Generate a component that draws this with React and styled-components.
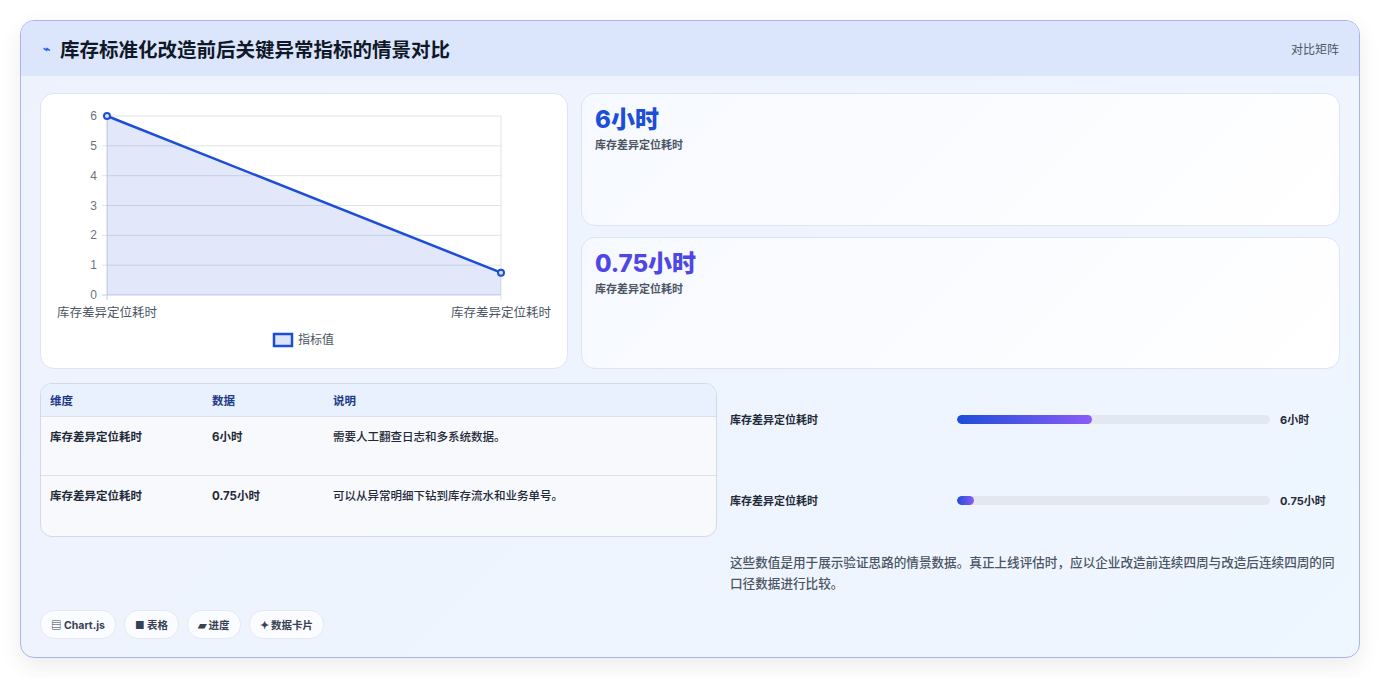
import React from "react";
import styled, { createGlobalStyle } from "styled-components";

const Global = createGlobalStyle`
  body { margin: 0; background: #fff; font-family: Inter, "Noto Sans CJK SC", sans-serif; }
`;

const Page = styled.div`
  padding: 20px 21px 20px 20px;
`;

const Card = styled.div`
  border: 1px solid #a9b4e8;
  border-radius: 14px;
  background: linear-gradient(135deg, #eef2fd, #eef6ff);
  box-shadow: 0 8px 22px rgba(0,0,0,0.08);
  overflow: hidden;
  height: 636px;
  display: flex;
  flex-direction: column;
`;

const Header = styled.div`
  height: 55px;
  background: #dbe6fd;
  display: flex;
  align-items: center;
  justify-content: space-between;
  padding: 0 20px 0 22px;
`;

const Title = styled.h1`
  margin: 0;
  font-size: 19.5px;
  font-weight: 700;
  color: #111827;
  display: flex;
  align-items: center;
  gap: 10px;
`;

const Tag = styled.span`
  font-size: 12px;
  color: #4b5563;
`;

const Body = styled.div`
  padding: 17px 19px 18px 19px;
  display: flex;
  flex-direction: column;
  flex: 1;
`;

const TopRow = styled.div`
  display: grid;
  grid-template-columns: 528px 1fr;
  gap: 13px;
  height: 276px;
`;

const Panel = styled.div`
  background: ${p => p.$grad ? "linear-gradient(135deg,#f6f9ff,#ffffff)" : "#fff"};
  border: 1px solid #dde4f3;
  border-radius: 14px;
`;

const Stack = styled.div`
  display: grid;
  grid-template-rows: 1fr 1fr;
  gap: 11px;
`;

const Stat = styled(Panel)`
  padding: 10px 13px;
`;

const StatValue = styled.div`
  font-size: 24px;
  font-weight: 800;
  color: ${p => p.$c};
  line-height: 32px;
`;

const StatLabel = styled.div`
  font-size: 11px;
  font-weight: 600;
  color: #4b5563;
`;

const BottomRow = styled.div`
  display: grid;
  grid-template-columns: 677px 1fr;
  gap: 13px;
  margin-top: 14px;
`;

const Table = styled.div`
  border: 1px solid #d3d9e6;
  border-radius: 12px;
  overflow: hidden;
  background: #f7f9fd;
  height: 152px;
  align-self: start;
`;

const Row = styled.div`
  display: grid;
  grid-template-columns: 162px 121px 1fr;
  padding: 0 9px;
  height: ${p => p.$h}px;
  align-items: ${p => p.$head ? "center" : "start"};
  padding-top: ${p => p.$head ? 0 : 11}px;
  box-sizing: border-box;
  background: ${p => p.$head ? "#eaf1fe" : "transparent"};
  border-bottom: ${p => p.$last ? "none" : "1px solid #dbe1ec"};
  font-size: 11.5px;
  font-weight: ${p => p.$head ? 700 : 500};
  color: ${p => p.$head ? "#1e3a8a" : "#1f2937"};
`;

const Cell = styled.div`
  font-weight: ${p => p.$b ? 700 : "inherit"};
`;

const Right = styled.div`
  padding-top: 27px;
`;

const BarRow = styled.div`
  display: grid;
  grid-template-columns: 227px 313px 1fr;
  align-items: center;
  height: 18px;
  margin-bottom: 63px;
  font-size: 11px;
  font-weight: 700;
  color: #1f2937;
`;

const Value = styled.span`
  padding-left: 10px;
`;

const Track = styled.div`
  height: 9px;
  border-radius: 5px;
  background: #e3e8f0;
  overflow: hidden;
`;

const Fill = styled.div`
  height: 100%;
  border-radius: 5px;
  background: linear-gradient(90deg, #1d4ed8, #8b5cf6);
`;

const Note = styled.p`
  margin: -20px 0 0;
  font-size: 12.6px;
  line-height: 21px;
  font-weight: 500;
  color: #4b5563;
`;

const Chips = styled.div`
  margin-top: auto;
  display: flex;
  gap: 8px;
`;

const Chip = styled.span`
  background: #fbfcff;
  border: 1px solid #e4e8f2;
  border-radius: 14px;
  padding: 6px 10px;
  font-size: 10.5px;
  font-weight: 700;
  color: #374151;
`;

function Chart() {
  const x0 = 66, x1 = 460, y0 = 22, y1 = 201;
  const ys = v => y1 - (v / 6) * (y1 - y0);
  return (
    <svg width="526" height="274" style={{ display: "block" }}>
      {[0,1,2,3,4,5,6].map(v => (
        <g key={v}>
          <line x1={x0 - 5} x2={x1} y1={ys(v)} y2={ys(v)} stroke={v === 0 ? "#c8cfdc" : "#dfe3ea"} />
          <text x={x0 - 10} y={ys(v) + 4} textAnchor="end" fontSize="12" fill="#6b7280" fontFamily="Liberation Sans">{v}</text>
        </g>
      ))}
      <line x1={x0} x2={x0} y1={y0} y2={y1 + 5} stroke="#c8cfdc" />
      <line x1={x1} x2={x1} y1={y0} y2={y1 + 5} stroke="#dfe3ea" />
      <polygon points={`${x0},${ys(6)} ${x1},${ys(0.75)} ${x1},${y1} ${x0},${y1}`} fill="rgba(29,78,216,0.13)" />
      <line x1={x0} y1={ys(6)} x2={x1} y2={ys(0.75)} stroke="#1d4ed8" strokeWidth="2.5" />
      <circle cx={x0} cy={ys(6)} r="3" fill="#dbe4f8" stroke="#1d4ed8" strokeWidth="2" />
      <circle cx={x1} cy={ys(0.75)} r="3" fill="#dbe4f8" stroke="#1d4ed8" strokeWidth="2" />
      <text x={x0} y="223" textAnchor="middle" fontSize="12.5" fill="#4b5563">库存差异定位耗时</text>
      <text x={x1} y="223" textAnchor="middle" fontSize="12.5" fill="#4b5563">库存差异定位耗时</text>
      <rect x="233" y="240" width="18" height="12" fill="#dde4f7" stroke="#1d4ed8" strokeWidth="2.5" />
      <text x="257" y="250" fontSize="12" fill="#4b5563">指标值</text>
    </svg>
  );
}

export default function App() {
  return (
    <Page>
      <Global />
      <Card>
        <Header>
          <Title><span style={{ color: "#2563eb", fontSize: 12 }}>⌁</span>库存标准化改造前后关键异常指标的情景对比</Title>
          <Tag>对比矩阵</Tag>
        </Header>
        <Body>
          <TopRow>
            <Panel><Chart /></Panel>
            <Stack>
              <Stat $grad><StatValue $c="#1d4ed8">6小时</StatValue><StatLabel>库存差异定位耗时</StatLabel></Stat>
              <Stat $grad><StatValue $c="#4f46e5">0.75小时</StatValue><StatLabel>库存差异定位耗时</StatLabel></Stat>
            </Stack>
          </TopRow>
          <BottomRow>
            <Table>
              <Row $head $h={33}><Cell>维度</Cell><Cell>数据</Cell><Cell>说明</Cell></Row>
              <Row $h={59}><Cell $b>库存差异定位耗时</Cell><Cell $b>6小时</Cell><Cell>需要人工翻查日志和多系统数据。</Cell></Row>
              <Row $h={59} $last><Cell $b>库存差异定位耗时</Cell><Cell $b>0.75小时</Cell><Cell>可以从异常明细下钻到库存流水和业务单号。</Cell></Row>
            </Table>
            <Right>
              <BarRow><span>库存差异定位耗时</span><Track><Fill style={{ width: "43%" }} /></Track><Value>6小时</Value></BarRow>
              <BarRow><span>库存差异定位耗时</span><Track><Fill style={{ width: "5.4%" }} /></Track><Value>0.75小时</Value></BarRow>
              <Note>这些数值是用于展示验证思路的情景数据。真正上线评估时，应以企业改造前连续四周与改造后连续四周的同口径数据进行比较。</Note>
            </Right>
          </BottomRow>
          <Chips>
            <Chip>▤ Chart.js</Chip>
            <Chip>■ 表格</Chip>
            <Chip>▰ 进度</Chip>
            <Chip>✦ 数据卡片</Chip>
          </Chips>
        </Body>
      </Card>
    </Page>
  );
}
